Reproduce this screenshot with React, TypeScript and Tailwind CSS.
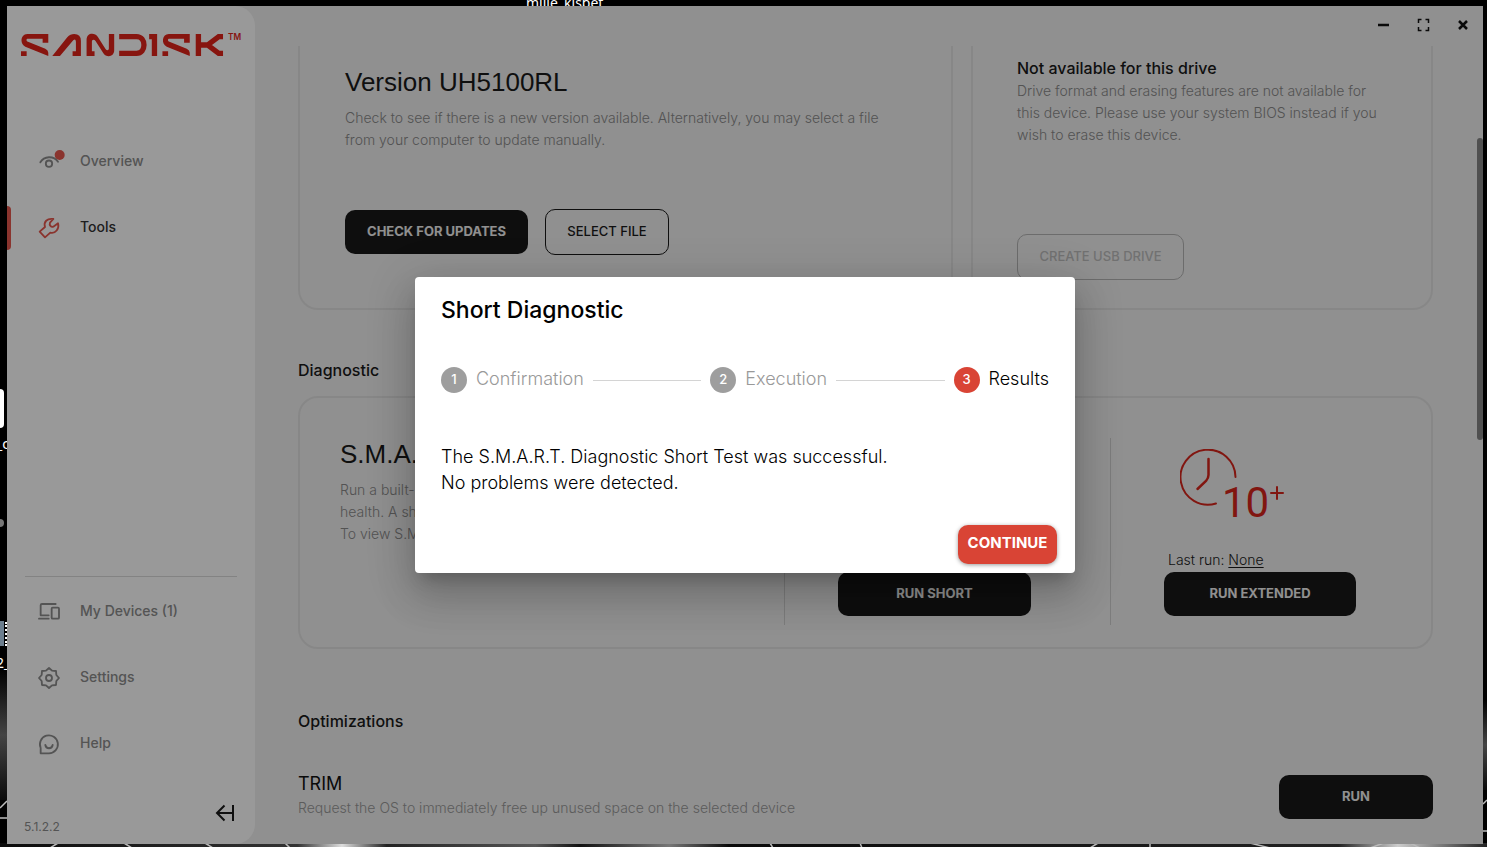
import React from 'react';

const iconProps = {
    viewBox: '0 0 66 66',
    fill: 'none',
    stroke: 'currentColor',
    strokeWidth: 5.5,
    strokeLinecap: 'round' as const,
    strokeLinejoin: 'round' as const,
    className: 'w-[22px] h-[22px] shrink-0 overflow-visible',
    'aria-hidden': true,
};

const EyeIcon = () => (
    <svg {...iconProps}>
        <path d="M7 34 C18 15 47 13 60 32" />
        <circle cx="33" cy="38" r="9.5" />
        <circle cx="65" cy="12" r="15" fill="#e6574d" stroke="none" />
    </svg>
);

const WrenchIcon = () => (
    <svg {...iconProps}>
        <path d="M5 44 L21 30 C16 15 27 3 46 6 L36 17 C33 25 39 31 46 29 L60 19 C65 35 52 51 37 47 L21 61 Z" />
    </svg>
);

const DevicesIcon = () => (
    <svg {...iconProps}>
        <path d="M53 9 H12 Q8 9 8 13 V43 H32" />
        <path d="M3 53 H32" />
        <rect x="41" y="20" width="22" height="33" rx="3" />
    </svg>
);

const GearIcon = () => (
    <svg {...iconProps}>
        <path d="M33 3 L42 11 L54 12 L55 24 L63 33 L55 42 L54 54 L42 55 L33 63 L24 55 L12 54 L11 42 L3 33 L11 24 L12 12 L24 11 Z" />
        <circle cx="33" cy="33" r="9" />
    </svg>
);

const HelpIcon = () => (
    <svg {...iconProps}>
        <path d="M8 61 V45 A27 27 0 1 1 33 61 Z" />
        <path d="M22 36 C24 49 42 49 44 36" />
    </svg>
);

const Logo = () => (
    <svg viewBox="30 24 670 72" className="w-[223px] h-6" role="img" aria-label="SanDisk">
        <g fill="#e2231a">
            <path d="M52 27 H115 V53 H98 V41 H54 C48 41 48 48 54 50 L106 71 Q115 75 115 83 V93 L46 65 C28 57 32 27 52 27 Z M33 79 H50 V93 H33 Z" />
            <path d="M127 93 L172 37 Q181 27 193 27 Q213 28 213 47 V93 H188 V79 H198 V50 Q197 40 190 46 L150 93 Z" />
            <path d="M230 93 V45 C230 22 255 22 264 36 L287 72 C291 78 297 77 297 70 V27 H313 V76 C313 97 289 99 280 84 L257 48 C253 42 246 43 246 50 V79 H254 V93 Z" />
            <path d="M477 27 H540 V53 H523 V41 H479 C473 41 473 48 479 50 L531 71 Q540 75 540 83 V93 L471 65 C453 57 457 27 477 27 Z M458 79 H475 V93 H458 Z" />
        </g>
        <g fill="none" stroke="#e2231a" strokeWidth="16">
            <path d="M328 35 H380 C410 35 410 85 380 85 H328" />
            <path d="M434 93 V35 H418" />
            <path d="M566 27 V93 M640 35 H627 L594 60 L627 85 H640 M566 60 H598" />
        </g>
        <text x="655" y="44" fontSize="25" fontWeight="600" fill="#e2231a" fontFamily="Inter, sans-serif">TM</text>
    </svg>
);

const ClockIcon = () => (
    <svg viewBox="0 0 104 70" className="w-[104px] h-[70px]" role="img" aria-label="10+ minutes">
        <g fill="none" stroke="#d8261c" strokeWidth="2" strokeLinecap="round">
            <path d="M55.500 28 A27.500 27.500 0 1 0 36 54.500" />
            <path d="M28.500 10 V26 Q28.500 29 26 32 L17.500 40" strokeWidth="2.500" />
            <path d="M91 44 H103 M97 38 V50" />
        </g>
        <text x="42" y="68" fontSize="42" fill="#d8261c" fontFamily="Roboto, sans-serif">10</text>
    </svg>
);

interface NavItemProps {
    icon: React.ReactNode;
    label: string;
    active?: boolean;
}

const NavItem: React.FC<NavItemProps> = ({ icon, label, active = false }) => (
    <li className="relative">
        {active && <span className="absolute left-0 top-3.5 w-1 h-11 rounded-r bg-[#e6574d]" />}
        <a href="#" className="flex items-center gap-5 h-[66px] pt-1 pl-[31px]">
            <span className={active ? 'pt-0.5 text-[#e6574d]' : 'pt-0.5 text-[#8c8c8c]'}>{icon}</span>
            <span className={active ? 'text-sm font-medium text-[#333]' : 'text-sm font-medium text-[#8c8c8c]'}>
                {label}
            </span>
        </a>
    </li>
);

const Sidebar = () => (
    <aside className="w-[248px] shrink-0 flex flex-col bg-white rounded-r-[20px]">
        <div className="pt-[27px] pl-[13px]">
            <Logo />
        </div>
        <ul className="mt-[69px]">
            <NavItem icon={<EyeIcon />} label="Overview" />
            <NavItem icon={<WrenchIcon />} label="Tools" active />
        </ul>
        <ul className="mt-auto relative before:absolute before:inset-x-[18px] before:top-0 before:h-px before:bg-[#dadada]">
            <NavItem icon={<DevicesIcon />} label="My Devices (1)" />
            <NavItem icon={<GearIcon />} label="Settings" />
            <NavItem icon={<HelpIcon />} label="Help" />
        </ul>
        <div className="h-[70px] pl-[17px] pr-5 pb-[9px] flex items-end justify-between">
            <span className="text-xs text-[#8c8c8c]">5.1.2.2</span>
            <button type="button" aria-label="Collapse menu" className="pb-3">
                <svg viewBox="0 0 20 20" className="w-5 h-5" fill="none" stroke="#1a1a1a" strokeWidth="2">
                    <path d="M18 2 V18 M18 10 H2 M9.500 2.500 L2 10 L9.500 17.500" />
                </svg>
            </button>
        </div>
    </aside>
);

const TitleBar = () => (
    <div className="h-10 shrink-0 flex items-center justify-end gap-6 pr-3 pb-0.5">
        <button type="button" aria-label="Minimize">
            <svg viewBox="0 0 16 16" className="w-4 h-4" stroke="#111" strokeWidth="2.500">
                <path d="M3 8 H14" />
            </svg>
        </button>
        <button type="button" aria-label="Full screen">
            <svg viewBox="0 0 16 16" className="w-4 h-4" fill="none" stroke="#111" strokeWidth="1.500">
                <path d="M3.500 6 V2.500 H6.500 M10.500 2.500 H13.500 V6 M13.500 10 V13.500 H10.500 M6.500 13.500 H3.500 V10" />
            </svg>
        </button>
        <button type="button" aria-label="Close">
            <svg viewBox="0 0 16 16" className="w-4 h-4" stroke="#111" strokeWidth="2.500">
                <path d="M4 4 L12 12 M12 4 L4 12" />
            </svg>
        </button>
    </div>
);

const DarkButton: React.FC<{ label: string; width: string }> = ({ label, width }) => (
    <button type="button" className={`${width} h-11 pb-px rounded-[10px] bg-[#181818] text-[#f0f0f0] text-[13px] font-bold`}>
        {label}
    </button>
);

const steps = ['Confirmation', 'Execution', 'Results'];

const Dialog = () => (
    <div
        role="dialog"
        aria-labelledby="dialog-title"
        className="w-[660px] rounded bg-white pt-[19px] shadow-[0_11px_15px_-7px_rgba(0,0,0,0.2),0_24px_38px_3px_rgba(0,0,0,0.14),0_9px_46px_8px_rgba(0,0,0,0.12)]"
    >
        <h2 id="dialog-title" className="px-[26px] text-[23px] leading-7 font-medium text-black">
            Short Diagnostic
        </h2>
        <ol className="mt-[42px] px-[26px] flex items-center gap-[9px]">
            {steps.map((step, i) => (
                <React.Fragment key={step}>
                    {i > 0 && <li aria-hidden="true" className="flex-1 h-px bg-[#d4d4d4]" />}
                    <li className="flex items-center gap-[9px]">
                        <span
                            className={`w-[26px] h-[26px] rounded-full flex items-center justify-center text-[13px] font-medium text-white ${
                                i === 2 ? 'bg-[#d94435]' : 'bg-[#9e9e9e]'
                            }`}
                        >
                            {i + 1}
                        </span>
                        <span className={`text-lg font-light leading-[26px] pb-0.5 ${i === 2 ? 'text-black' : 'text-[#999]'}`}>
                            {step}
                        </span>
                    </li>
                </React.Fragment>
            ))}
        </ol>
        <p className="mt-[50px] px-[26px] text-lg font-light leading-[26px] text-black">
            The S.M.A.R.T. Diagnostic Short Test was successful.
            <br />
            No problems were detected.
        </p>
        <div className="flex justify-end pt-[29px] pr-[18px] pb-[9px]">
            <button
                type="button"
                className="w-[99px] h-[39px] pb-0.5 rounded-[10px] bg-[#d94435] text-white text-[15px] font-bold shadow-[0_1px_4px_rgba(0,0,0,0.4)]"
            >
                CONTINUE
            </button>
        </div>
    </div>
);

const Tools = () => (
    <div className="flex-1 min-h-0 flex">
        <div className="flex-1 min-w-0 overflow-hidden pl-[43px] pr-11">
            <div className="grid grid-cols-[655fr_462fr] gap-[18px] h-[264px]">
                <section className="border-2 border-t-0 border-[#e2e2e2] rounded-b-[20px] pl-[45px] pt-5">
                    <h2 className="font-['Liberation_Sans',sans-serif] text-[26px] leading-8 text-[#1a1a1a]">
                        Version UH5100RL
                    </h2>
                    <p className="mt-[9px] text-sm font-light leading-[22px] text-[#8a8a8a]">
                        Check to see if there is a new version available. Alternatively, you may select a file
                        <br />
                        from your computer to update manually.
                    </p>
                    <div className="mt-[58px] flex items-center gap-[17px]">
                        <DarkButton label="CHECK FOR UPDATES" width="w-[183px]" />
                        <button
                            type="button"
                            className="w-[124px] h-[46px] pb-px rounded-[10px] border border-[#1a1a1a] text-[13px] font-medium text-[#1a1a1a]"
                        >
                            SELECT FILE
                        </button>
                    </div>
                </section>
                <section className="border-2 border-t-0 border-[#e2e2e2] rounded-b-[20px] pl-11 pt-2.5">
                    <h3 className="text-base leading-6 font-medium text-[#1a1a1a]">Not available for this drive</h3>
                    <p className="text-sm font-light leading-[22px] text-[#8a8a8a]">
                        Drive format and erasing features are not available for
                        <br />
                        this device. Please use your system BIOS instead if you
                        <br />
                        wish to erase this device.
                    </p>
                    <button
                        type="button"
                        disabled
                        className="mt-[88px] w-[167px] h-[46px] pb-px rounded-[10px] border border-[#b4b4b4] text-[13px] font-medium text-[#bdbdbd]"
                    >
                        CREATE USB DRIVE
                    </button>
                </section>
            </div>

            <h2 className="mt-12 text-base leading-6 font-medium text-[#1a1a1a]">Diagnostic</h2>
            <section className="mt-3.5 h-[253px] border-2 border-[#e2e2e2] rounded-[20px] flex">
                <div className="flex-1 pl-10 pt-10">
                    <h3 className="font-['Liberation_Sans',sans-serif] text-[26px] leading-8 text-[#1a1a1a]">S.M.A.R.T.</h3>
                    <p className="mt-[9px] text-sm font-light leading-[22px] text-[#8a8a8a]">
                        Run a built-in test to check your drive&apos;s
                        <br />
                        health. A short test takes about two minutes.
                        <br />
                        To view S.M.A.R.T. attributes, see the details.
                    </p>
                </div>
                <div className="w-[326px] mt-10 mb-[22px] border-l border-[#cfcfcf] pl-[53px] flex flex-col justify-end pb-[9px]">
                    <DarkButton label="RUN SHORT" width="w-[193px]" />
                </div>
                <div className="w-[321px] mt-10 mb-[22px] border-l border-[#cfcfcf] pl-[53px] flex flex-col pb-[9px]">
                    <div className="pl-4 pt-[11px]">
                        <ClockIcon />
                    </div>
                    <p className="mt-auto pl-1 text-sm font-light leading-6 text-[#1a1a1a]">
                        Last run: <a href="#" className="underline underline-offset-2">None</a>
                    </p>
                    <DarkButton label="RUN EXTENDED" width="w-[192px]" />
                </div>
            </section>

            <h2 className="mt-[60px] text-base leading-6 font-medium text-[#1a1a1a]">Optimizations</h2>
            <section className="mt-[39px] flex items-end justify-between">
                <div>
                    <h3 className="text-lg leading-6 text-[#111]">TRIM</h3>
                    <p className="text-sm font-light leading-[23px] text-[#999]">
                        Request the OS to immediately free up unused space on the selected device
                    </p>
                </div>
                <DarkButton label="RUN" width="w-[154px]" />
            </section>
        </div>
        <div className="w-1.5 shrink-0 pt-[92px]">
            <div className="h-[302px] rounded-full bg-[#858585]" />
        </div>
    </div>
);

// Strip of wallpaper that shows below and beside the window
const Wallpaper = () => (
    <svg className="absolute inset-0 w-full h-full" viewBox="0 0 1487 847" preserveAspectRatio="none" aria-hidden="true">
        <defs>
            <linearGradient id="glow" x1="0" x2="1">
                <stop offset="0" stopColor="#0a0a0a" />
                <stop offset="0.200" stopColor="#333" />
                <stop offset="0.230" stopColor="#ddd" />
                <stop offset="0.260" stopColor="#222" />
                <stop offset="0.360" stopColor="#555" />
                <stop offset="0.390" stopColor="#111" />
                <stop offset="0.450" stopColor="#777" />
                <stop offset="0.490" stopColor="#0a0a0a" />
                <stop offset="0.900" stopColor="#222" />
                <stop offset="0.940" stopColor="#ccc" />
                <stop offset="1" stopColor="#222" />
            </linearGradient>
            <linearGradient id="side" x1="0" x2="0" y1="0" y2="1">
                <stop offset="0" stopColor="#000" />
                <stop offset="0.500" stopColor="#444" />
                <stop offset="1" stopColor="#0a0a0a" />
            </linearGradient>
        </defs>
        <rect y="843" width="1487" height="4" fill="url(#glow)" />
        <rect y="670" width="7" height="130" fill="url(#side)" />
        <rect x="1483" y="700" width="4" height="90" fill="url(#side)" />
        <path
            d="M0 808 L7 801 M0 818 H7 M1483 804 L1487 800 M1483 831 H1487 M50 848 L58 843 M124 843 L132 848 M205 843 L213 848 M285 843 L290 848 M770 843 L773 848 M860 843 L862 848 M1090 848 L1098 843 M1150 843 V848 M1250 843 L1270 848 M1370 848 L1384 843 M1410 843 L1420 848"
            stroke="#bbb"
            strokeWidth="1.500"
            fill="none"
        />
        <circle cx="0" cy="523" r="4" fill="#777" />
    </svg>
);

const App = () => (
    <div className="relative min-h-screen flex overflow-hidden bg-black pt-1.5 pl-[7px] pr-1 pb-[3px] font-[Inter,sans-serif]">
        <Wallpaper />
        <span className="absolute left-[526px] -top-[7px] text-sm leading-5 text-white font-['Noto_Sans',sans-serif]">mille_kisbet</span>
        <span className="absolute left-0 top-[389px] w-1 h-[39px] rounded-r bg-white" />
        <span className="absolute -left-1 top-[434px] text-sm leading-5 text-white font-['Noto_Sans',sans-serif]">_c</span>
        <span className="absolute left-0 top-[621px] w-1 h-[25px] bg-[#6d7f8f]" />
        <span className="absolute left-[5px] top-[622px] h-6 border-l-2 border-dotted border-white" />
        <span className="absolute -left-1 top-[653px] text-sm leading-5 text-white font-['Noto_Sans',sans-serif]">2_</span>

        <div className="relative flex-1 flex bg-[#f0f0f0]">
            <Sidebar />
            <main className="flex-1 min-w-0 flex flex-col">
                <TitleBar />
                <Tools />
            </main>
            <div className="absolute inset-0 flex items-center justify-center bg-black/40">
                <Dialog />
            </div>
        </div>
    </div>
);

export default App;
